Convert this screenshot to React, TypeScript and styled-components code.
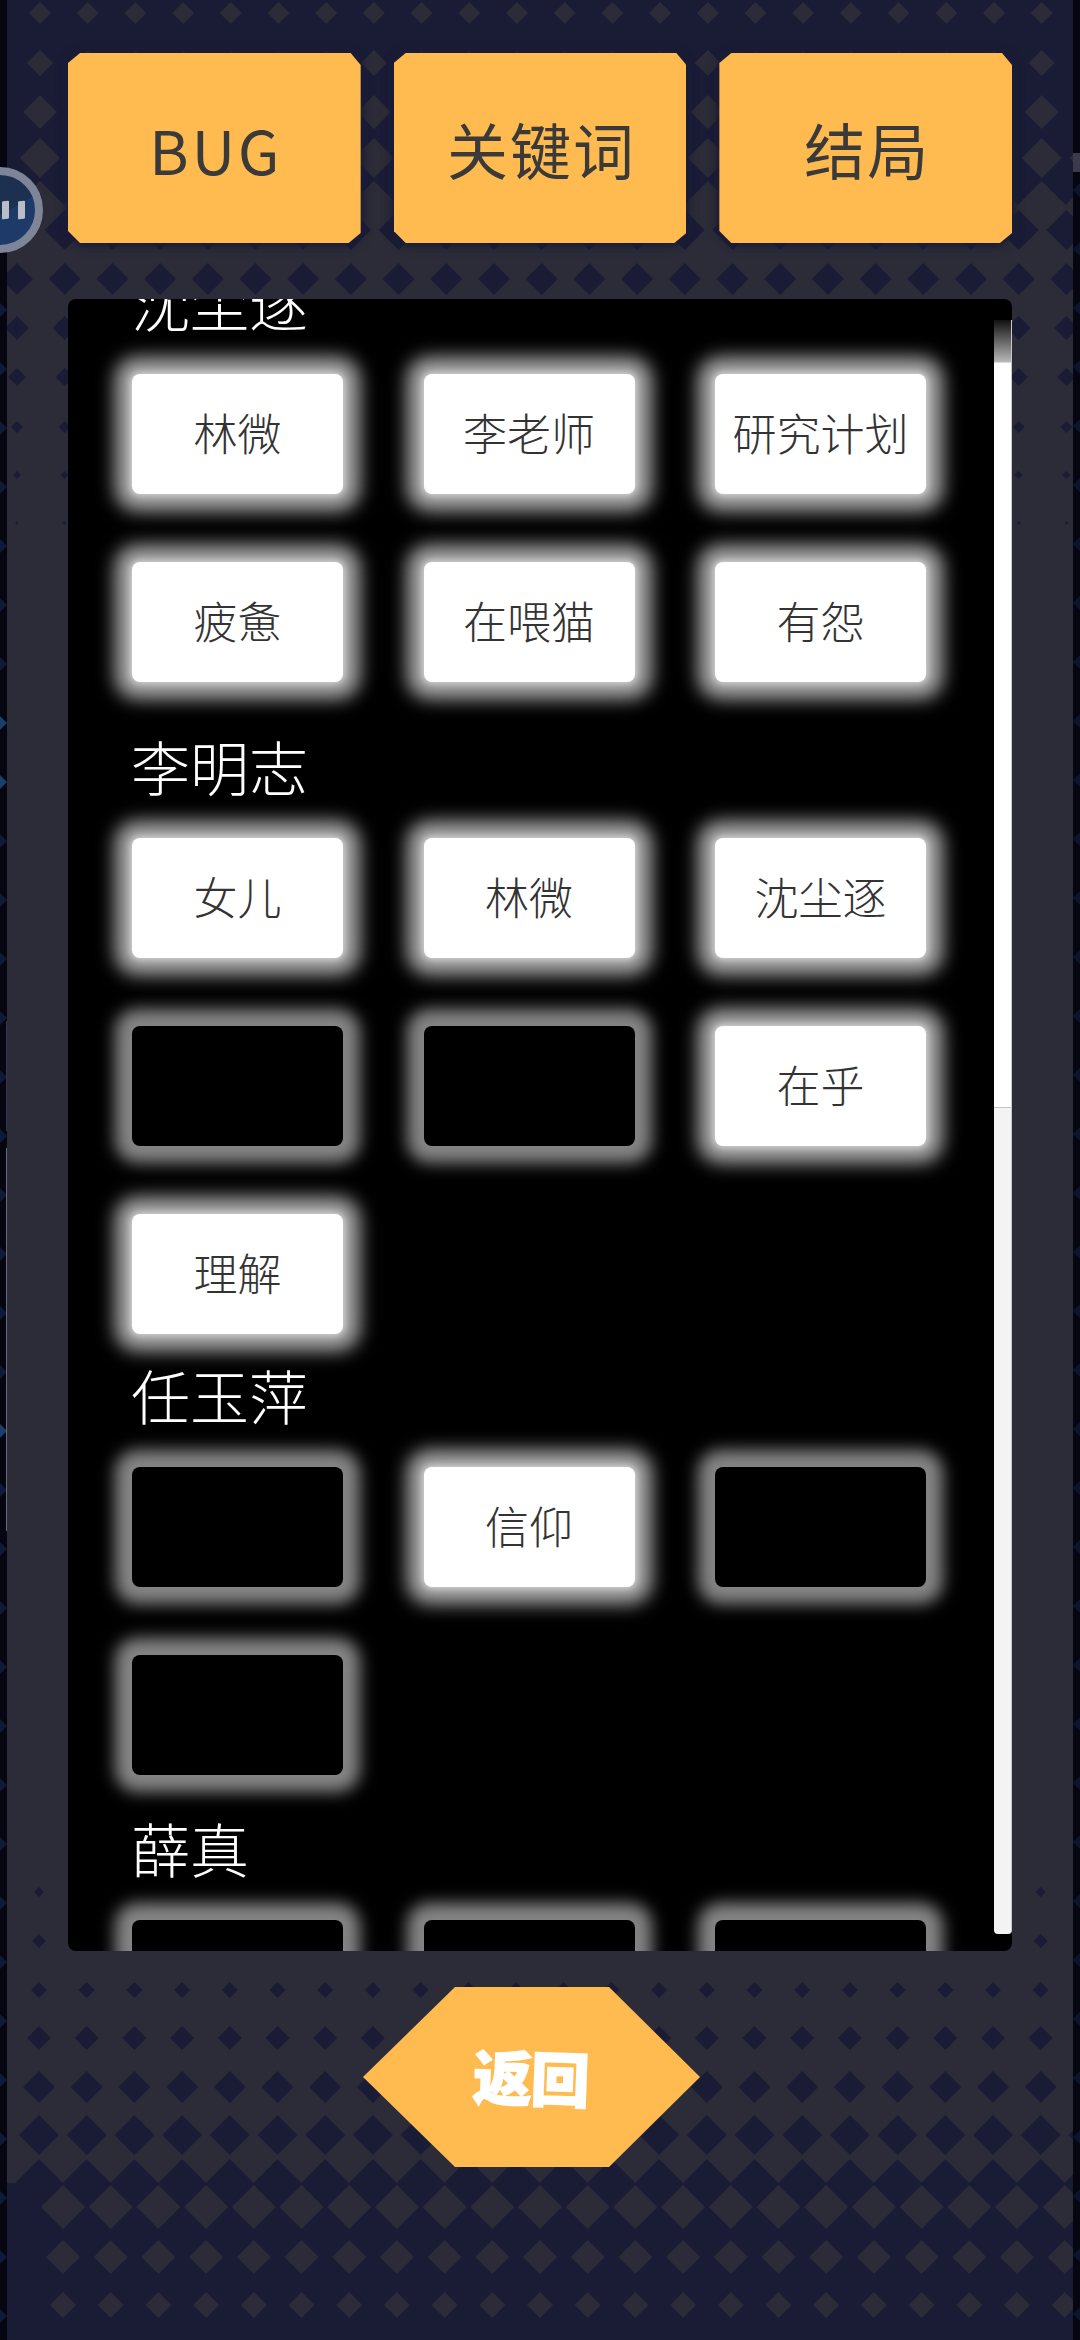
import React from 'react';
import styled, { createGlobalStyle } from 'styled-components';

const CJK = '"Noto Sans CJK SC", "Noto Sans", sans-serif';
const NAVY = '#1a1c36';
const SLATE = '#2c2c38';

const Global = createGlobalStyle`
  html, body { margin: 0; padding: 0; background: #05060f; }
  * { box-sizing: border-box; }
`;

const Screen = styled.div`
  position: relative;
  width: 1080px;
  height: 2340px;
  overflow: hidden;
  padding: 53px 68px 0;
  font-family: ${CJK};
`;

const Backdrop = styled.svg`
  position: absolute;
  inset: 0;
  width: 1080px;
  height: 2340px;
  filter: blur(0.7px);
`;

const Tabs = styled.nav`
  position: relative;
  display: flex;
  gap: 33px;
  height: 190px;
  margin-bottom: 56px;
`;

const TabShell = styled.div`
  flex: 1;
  filter: drop-shadow(0 0 4px ${NAVY}) drop-shadow(0 1px 3px ${NAVY});
`;

const Tab = styled.button<{ $spaced?: boolean }>`
  width: 100%;
  height: 100%;
  border: 0;
  padding: 0 0 0 3px;
  background: #ffbb50;
  color: #3a3a3a;
  font-family: ${CJK};
  font-size: ${(p) => (p.$spaced ? '60px' : '61px')};
  letter-spacing: ${(p) => (p.$spaced ? '3px' : '2px')};
  clip-path: polygon(12px 0, calc(100% - 10px) 0, 100% 12px, 100% calc(100% - 10px), calc(100% - 12px) 100%, 12px 100%, 0 calc(100% - 12px), 0 10px);
`;

const Panel = styled.section`
  position: relative;
  height: 1652px;
  background: #000;
  border-radius: 8px;
  overflow: hidden;
`;

const Scroller = styled.div`
  margin-top: -35px;
  padding: 0 64px 0 63px;
`;

const Group = styled.div<{ $gap: number }>`
  margin-top: ${(p) => p.$gap}px;
`;

const Name = styled.h2`
  margin: 0 0 34px;
  height: 76px;
  color: #fff;
  font-size: 59px;
  font-weight: 200;
  line-height: 76px;
`;

const Grid = styled.div`
  display: grid;
  grid-template-columns: repeat(3, 211px);
  column-gap: 80.5px;
  row-gap: 68px;
  margin-left: 1px;
`;

const Tile = styled.div<{ $on: boolean }>`
  display: flex;
  align-items: center;
  justify-content: center;
  height: 120px;
  padding-bottom: 5px;
  border-radius: 8px;
  background: ${(p) => (p.$on ? '#fff' : '#000')};
  box-shadow: ${(p) =>
    p.$on
      ? '0 0 6px 2px rgba(255,255,255,.5), 0 0 18px 17px #a6a6a6'
      : '0 0 16px 17px #858585'};
  color: #333;
  font-size: 44px;
  font-weight: 200;
  white-space: nowrap;
`;

const Track = styled.div`
  position: absolute;
  top: 21px;
  right: 0;
  width: 18px;
  height: 1614px;
  background: #f3f3f3;
  border-radius: 0 0 4px 4px;
  border-right: 1px solid #c8c8cc;
`;

const Thumb = styled.div`
  height: 788px;
  background: linear-gradient(#111 0, #b8b8b8 42px, #fff 43px, #fff 100%);
  border-bottom: 1px solid #c4c4c4;
`;

const Footer = styled.div`
  position: relative;
  display: flex;
  justify-content: center;
  padding: 36px 17px 0 0;
`;

const Back = styled.button`
  width: 337px;
  height: 180px;
  border: 0;
  padding: 0 0 3px;
  background: #ffbb50;
  clip-path: polygon(27.3% 0, 73% 0, 100% 50%, 73% 100%, 27.3% 100%, 0 50%);
  color: #fff;
  font-family: ${CJK};
  font-size: 59px;
  font-weight: 900;
  letter-spacing: -1px;
  -webkit-text-stroke: 1.5px #fff;
`;

const BackLabel = styled.span`
  display: inline-block;
  transform: rotate(2deg);
`;

const Float = styled.div`
  position: absolute;
  top: 167px;
  left: -43px;
  display: flex;
  align-items: center;
  justify-content: flex-end;
  gap: 9px;
  width: 86px;
  height: 86px;
  padding-right: 10px;
  border-radius: 50%;
  background: linear-gradient(150deg, #1c3050 0 55%, #1d3a68 55%);
  border: 8px solid #7f8599;
`;

const Dot = styled.i<{ $dim?: boolean }>`
  display: block;
  width: 7px;
  height: 18px;
  border-radius: 1px;
  background: ${(p) => (p.$dim ? '#5a6a88' : '#b9bdc8')};
  transform: skewY(-8deg);
`;

const range = (n: number) => Array.from({ length: n }, (_, i) => i);

const Diamond = ({ x, y, r, fill }: { x: number; y: number; r: number; fill: string }) => (
  <polygon points={`${x - r},${y} ${x},${y - r} ${x + r},${y} ${x},${y + r}`} fill={fill} />
);

const rows = (list: [number, number][], x0: number, fill: string) =>
  list.flatMap(([y, r]) =>
    range(24).map((i) => <Diamond key={`${fill}${y}-${i}`} x={x0 + i * 47.7} y={y} r={r} fill={fill} />),
  );

const Pattern = () => (
  <Backdrop viewBox="0 0 1080 2340">
    <rect width="1080" height="2340" fill="#05060f" />
    <rect x="7" width="1066" height="2340" fill={SLATE} />
    <rect x="7" width="1066" height="205" fill={NAVY} />
    <rect x="7" y="2183" width="1066" height="157" fill={NAVY} />
    <clipPath id="band">
      <rect x="7" width="1066" height="2340" />
    </clipPath>
    <g clipPath="url(#band)">
      {rows([[13, 11], [63, 13], [112, 17], [158, 20], [205, 24]], 40, SLATE)}
      {rows([[230, 20], [279, 16], [328, 12], [377, 9], [427, 6], [475, 4], [523, 2]], 17, NAVY)}
      {rows([[1892, 5], [1941, 7], [1990, 8], [2038, 12], [2087, 16], [2135, 20], [2183, 24]], 39, NAVY)}
      {rows([[2207, 22], [2257, 17], [2305, 13]], 63, SLATE)}
    </g>
    {range(36).map((i) => (
      <Diamond key={`l${i}`} x={0} y={310 + i * 59} r={7} fill={i === 7 || i === 8 || i === 19 ? '#1d3d6c' : '#0f1a38'} />
    ))}
    {range(38).map((i) => (
      <Diamond key={`r${i}`} x={1080} y={190 + i * 59} r={7} fill="#0d1430" />
    ))}
    <rect x="1073" y="153" width="7" height="19" fill="#3a3a4a" />
    <rect x="6" y="1021" width="1" height="110" fill="#33364a" />
    <rect x="6" y="1148" width="1" height="383" fill="#666a7c" />
  </Backdrop>
);

const groups = [
  { name: '沈尘逐', gap: 0, items: ['林微', '李老师', '研究计划', '疲惫', '在喂猫', '有怨'] },
  { name: '李明志', gap: 46, items: ['女儿', '林微', '沈尘逐', '', '', '在乎', '理解'] },
  { name: '任玉萍', gap: 23, items: ['', '信仰', '', ''] },
  { name: '薛真', gap: 35, items: ['', '', ''] },
];

export default function App() {
  return (
    <Screen>
      <Global />
      <Pattern />
      <Tabs>
        <TabShell><Tab $spaced>BUG</Tab></TabShell>
        <TabShell><Tab>关键词</Tab></TabShell>
        <TabShell><Tab>结局</Tab></TabShell>
      </Tabs>
      <Panel>
        <Scroller>
          {groups.map((g) => (
            <Group key={g.name} $gap={g.gap}>
              <Name>{g.name}</Name>
              <Grid>
                {g.items.map((t, i) => (
                  <Tile key={i} $on={t !== ''}>{t}</Tile>
                ))}
              </Grid>
            </Group>
          ))}
        </Scroller>
        <Track><Thumb /></Track>
      </Panel>
      <Footer>
        <Back><BackLabel>返回</BackLabel></Back>
      </Footer>
      <Float>
        <Dot $dim />
        <Dot />
        <Dot />
      </Float>
    </Screen>
  );
}
